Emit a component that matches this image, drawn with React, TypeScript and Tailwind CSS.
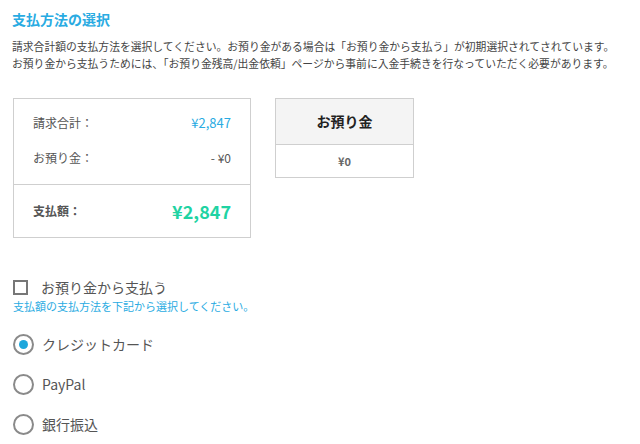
import { useState } from "react";

const FONT = { fontFamily: '"Noto Sans CJK JP", "Noto Sans", sans-serif' };

type Method = "card" | "paypal" | "bank";

const METHODS: { id: Method; label: string }[] = [
  { id: "card", label: "クレジットカード" },
  { id: "paypal", label: "PayPal" },
  { id: "bank", label: "銀行振込" },
];

function Radio({ checked }: { checked: boolean }) {
  return (
    <span className="flex h-[21px] w-[21px] shrink-0 items-center justify-center rounded-full border-2 border-[#8a8a8a] bg-white">
      {checked && <span className="h-[9px] w-[9px] rounded-full bg-[#1ea7dc]" />}
    </span>
  );
}

export default function App() {
  const [method, setMethod] = useState<Method>("card");
  const [useDeposit, setUseDeposit] = useState(false);

  return (
    <div className="h-[444px] w-[640px] bg-white px-[12px] pt-[9px] text-[#555]" style={FONT}>
      <h2 className="text-[14px] font-bold leading-[20px] text-[#29abe2]">支払方法の選択</h2>
      <p className="mt-[9px] text-[10.8px] leading-[17px] text-[#444]">
        請求合計額の支払方法を選択してください。お預り金がある場合は「お預り金から支払う」が初期選択されてされています。
        <br />
        お預り金から支払うためには、「お預り金残高/出金依頼」ページから事前に入金手続きを行なっていただく必要があります。
      </p>

      <div className="ml-px mt-[26px] flex items-start gap-[24px]">
        <div className="w-[238px] border border-[#cfcfcf]">
          <div className="px-[19px] pb-[15px] pt-[13px] text-[12px]">
            <div className="flex h-[22px] items-center justify-between">
              <span>請求合計：</span>
              <span className="text-[13px] text-[#29abe2]">¥2,847</span>
            </div>
            <div className="mt-[13px] flex h-[22px] items-center justify-between">
              <span>お預り金：</span>
              <span>- ¥0</span>
            </div>
          </div>
          <div className="flex h-[53px] items-center justify-between border-t border-[#cfcfcf] px-[19px]">
            <span className="text-[12px] font-bold">支払額：</span>
            <span className="text-[18px] font-bold text-[#1fd3a3]">¥2,847</span>
          </div>
        </div>

        <div className="w-[139px] border border-[#cfcfcf]">
          <div className="flex h-[45px] items-center justify-center bg-[#f4f4f4] text-[14px] font-bold text-[#222]">
            お預り金
          </div>
          <div className="flex h-[33px] items-center justify-center border-t border-[#cfcfcf] text-[11px] font-bold text-[#666]">
            ¥0
          </div>
        </div>
      </div>

      <label className="ml-px mt-[40px] flex cursor-pointer items-center gap-[13px]" onClick={() => setUseDeposit(!useDeposit)}>
        <span className="flex h-[15px] w-[15px] items-center justify-center border-2 border-[#777] bg-white">
          {useDeposit && <span className="h-[7px] w-[7px] bg-[#1ea7dc]" />}
        </span>
        <span className="text-[14px] leading-[18px]">お預り金から支払う</span>
      </label>
      <p className="ml-px mt-[3px] text-[11px] leading-[15px] text-[#29abe2]">支払額の支払方法を下記から選択してください。</p>

      <div className="ml-px mt-[20px] flex flex-col gap-[19px]">
        {METHODS.map((m) => (
          <div key={m.id} className="flex cursor-pointer items-center gap-[8px]" onClick={() => setMethod(m.id)}>
            <Radio checked={method === m.id} />
            <span className="text-[14px] leading-[21px]">{m.label}</span>
          </div>
        ))}
      </div>
    </div>
  );
}
